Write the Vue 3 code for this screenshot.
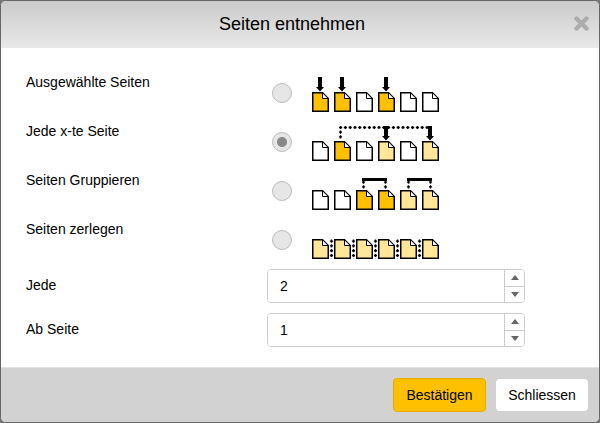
<script setup>
import { ref } from 'vue';

const mode = ref('nth');
const every = ref('2');
const fromPage = ref('1');

const pageXs = [0, 22, 44, 66, 88, 110];

const options = [
  {
    id: 'selected',
    label: 'Ausgewählte Seiten',
    pages: ['dark', 'dark', 'white', 'dark', 'white', 'white'],
    arrows: [8, 30, 74],
    bars: [],
    dots: []
  },
  {
    id: 'nth',
    label: 'Jede x-te Seite',
    pages: ['white', 'dark', 'white', 'light', 'white', 'light'],
    arrows: [74, 118],
    bars: [],
    dots: ['M27 14.5H118', 'M28.5 17.5V27']
  },
  {
    id: 'group',
    label: 'Seiten Gruppieren',
    pages: ['white', 'white', 'dark', 'dark', 'light', 'light'],
    arrows: [],
    bars: [[50, 25], [95, 25]],
    dots: ['M51.5 18.5V27', 'M73.5 18.5V27', 'M96.5 18.5V27', 'M118.5 18.5V27']
  },
  {
    id: 'split',
    label: 'Seiten zerlegen',
    pages: ['light', 'light', 'light', 'light', 'light', 'light'],
    arrows: [],
    bars: [],
    dots: ['M19.5 28.5V48', 'M41.5 28.5V48', 'M63.5 28.5V48', 'M85.5 28.5V48', 'M107.5 28.5V48']
  }
];

const fills = { white: '#ffffff', dark: '#ffc000', light: '#ffe699' };
</script>

<template>
  <div class="modal">
    <header class="modal-header">
      <h4>Seiten entnehmen</h4>
      <button class="close" type="button" aria-label="Schliessen">
        <svg width="15" height="15" viewBox="0 0 15 15">
          <path d="M2.5 2.5L12.5 12.5M12.5 2.5L2.5 12.5" stroke="#acacac" stroke-width="4.4" stroke-linecap="round" />
        </svg>
      </button>
    </header>

    <div class="modal-body">
      <label v-for="opt in options" :key="opt.id" class="option">
        <span class="label">{{ opt.label }}</span>
        <input v-model="mode" class="radio" type="radio" name="mode" :value="opt.id" />
        <svg class="pages" width="134" height="49" viewBox="0 0 134 49">
          <g v-for="(kind, i) in opt.pages" :key="i" :transform="`translate(${pageXs[i]} 28)`">
            <path d="M.75 .75H10.5L16.25 6.5V19.25H.75Z" :fill="fills[kind]" stroke="#000" stroke-width="1.5" />
            <path d="M10.5 .75V6.5H16.25Z" fill="#fff" stroke="#000" />
          </g>
          <path
            v-for="x in opt.arrows"
            :key="x"
            :d="`M${x - 2} 13H${x + 2}V23H${x + 4}L${x} 27.5L${x - 4} 23H${x - 2}Z`"
            fill="#000"
          />
          <rect v-for="bar in opt.bars" :key="bar[0]" :x="bar[0]" y="16" :width="bar[1]" height="3" fill="#000" />
          <g v-for="d in opt.dots" :key="d" fill="none" stroke="#000">
            <path :d="d" stroke-width="1.4" stroke-dasharray="3.2 1.6" />
            <path :d="d" stroke-width="3.2" stroke-dasharray="1.4 3.4" stroke-dashoffset="-0.9" />
          </g>
        </svg>
      </label>

      <div class="field">
        <span class="label">Jede</span>
        <div class="spinner">
          <input v-model="every" type="text" />
          <div class="arrows">
            <button type="button"><i class="up"></i></button>
            <button type="button"><i class="down"></i></button>
          </div>
        </div>
      </div>
      <div class="field">
        <span class="label">Ab Seite</span>
        <div class="spinner">
          <input v-model="fromPage" type="text" />
          <div class="arrows">
            <button type="button"><i class="up"></i></button>
            <button type="button"><i class="down"></i></button>
          </div>
        </div>
      </div>
    </div>

    <footer class="modal-footer">
      <button class="btn primary" type="button">Bestätigen</button>
      <button class="btn" type="button">Schliessen</button>
    </footer>
  </div>
</template>

<style>
html,
body {
  background: #777;
}
</style>

<style scoped>
.modal {
  width: 600px;
  height: 423px;
  box-sizing: border-box;
  display: flex;
  flex-direction: column;
  border: 1px solid #666;
  border-radius: 6px;
  overflow: hidden;
  background: #fff;
  font-family: "Liberation Sans", Arial, sans-serif;
  font-size: 14px;
  color: #000;
}

.modal-header {
  height: 47px;
  flex: none;
  box-sizing: border-box;
  padding-right: 16px;
  display: flex;
  align-items: center;
  justify-content: center;
  position: relative;
  background: linear-gradient(#cbcbcb, #e8e8e8);
}

.modal-header h4 {
  margin: 0;
  font-size: 18px;
  font-weight: 400;
}

.close {
  position: absolute;
  right: 10px;
  top: 15px;
  padding: 0;
  border: 0;
  background: none;
  line-height: 0;
}

.modal-body {
  flex: 1;
  padding: 16px 0 0 25px;
}

.option {
  display: grid;
  grid-template-columns: 246px 40px 134px;
  height: 49px;
}

.label {
  line-height: 20px;
  padding-top: 8px;
}

.radio {
  appearance: none;
  width: 20px;
  height: 20px;
  box-sizing: border-box;
  margin: 19px 0 0;
  border: 1.5px solid #bcbcbc;
  border-radius: 50%;
  background: #e6e6e6;
}

.radio:checked {
  background: radial-gradient(circle, #888 0 4.5px, #e6e6e6 5.5px);
}

.pages {
  display: block;
}

.field {
  display: grid;
  grid-template-columns: 241px 258px;
  height: 44px;
}

.option + .field {
  margin-top: 9px;
}

.field .label {
  padding-top: 6px;
}

.spinner {
  height: 34px;
  box-sizing: border-box;
  display: flex;
  border: 1px solid #ccc;
  border-radius: 4px;
  overflow: hidden;
}

.spinner input {
  flex: 1;
  min-width: 0;
  padding: 0 12px;
  border: 0;
  outline: 0;
  font: inherit;
  color: #000;
}

.arrows {
  width: 19px;
  display: flex;
  flex-direction: column;
  border-left: 1px solid #ccc;
}

.arrows button {
  flex: 1;
  padding: 0;
  border: 0;
  background: #fff;
  display: flex;
  align-items: center;
  justify-content: center;
}

.arrows button + button {
  border-top: 1px solid #ccc;
}

.arrows i {
  width: 0;
  height: 0;
  border-left: 4.5px solid transparent;
  border-right: 4.5px solid transparent;
}

.arrows .up {
  border-bottom: 5px solid #666;
}

.arrows .down {
  border-top: 5px solid #666;
}

.modal-footer {
  height: 55px;
  flex: none;
  box-sizing: border-box;
  display: flex;
  justify-content: flex-end;
  align-items: center;
  gap: 10px;
  padding: 0 11px 0 0;
  background: #d2d2d2;
  border-top: 1px solid #e4e4e4;
}

.btn {
  height: 32px;
  width: 92px;
  padding: 0;
  border: 0;
  border-radius: 4px;
  background: #fff;
  font: inherit;
  color: #000;
}

.primary {
  height: 34px;
  width: 93px;
  background: #ffc000;
  border: 1px solid #e6ad00;
}
</style>
